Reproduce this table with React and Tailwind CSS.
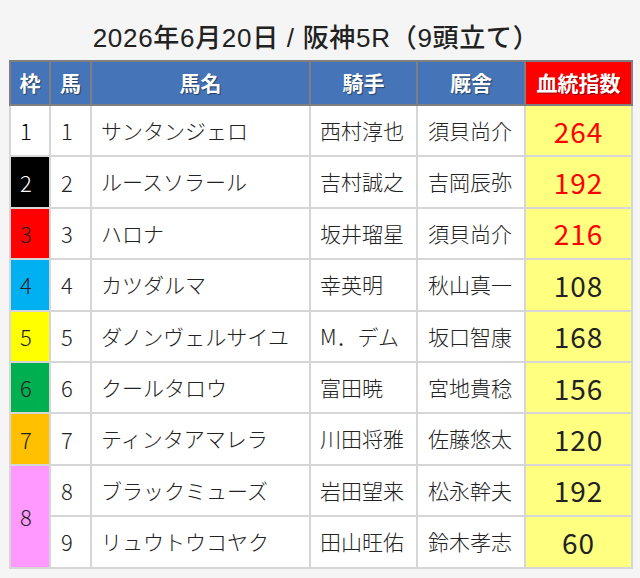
import React from 'react';

const FONT = { fontFamily: '"Liberation Sans", "Noto Sans CJK JP", sans-serif' };
const JP = { fontFamily: '"Noto Sans CJK JP", "Noto Sans", sans-serif' };

// 枠番ごとの色
const FRAME = {
  1: 'bg-white text-black',
  2: 'bg-black text-white',
  3: 'bg-[#ff0000] text-[#2a2a2a]',
  4: 'bg-[#00b0f0] text-[#222]',
  5: 'bg-[#ffff00] text-[#222]',
  6: 'bg-[#00b050] text-[#222]',
  7: 'bg-[#ffc000] text-[#222]',
  8: 'bg-[#ff99ff] text-[#222]',
};

const horses = [
  { frame: 1, no: 1, name: 'サンタンジェロ', jockey: '西村淳也', trainer: '須貝尚介', idx: 264, top: true },
  { frame: 2, no: 2, name: 'ルースソラール', jockey: '吉村誠之', trainer: '吉岡辰弥', idx: 192, top: true },
  { frame: 3, no: 3, name: 'ハロナ', jockey: '坂井瑠星', trainer: '須貝尚介', idx: 216, top: true },
  { frame: 4, no: 4, name: 'カツダルマ', jockey: '幸英明', trainer: '秋山真一', idx: 108 },
  { frame: 5, no: 5, name: 'ダノンヴェルサイユ', jockey: 'M．デム', trainer: '坂口智康', idx: 168 },
  { frame: 6, no: 6, name: 'クールタロウ', jockey: '富田暁', trainer: '宮地貴稔', idx: 156 },
  { frame: 7, no: 7, name: 'ティンタアマレラ', jockey: '川田将雅', trainer: '佐藤悠太', idx: 120 },
  { frame: 8, no: 8, name: 'ブラックミューズ', jockey: '岩田望来', trainer: '松永幹夫', idx: 192, span: 2 },
  { frame: 8, no: 9, name: 'リュウトウコヤク', jockey: '田山旺佑', trainer: '鈴木孝志', idx: 60, skipFrame: true },
];

const th = 'border-2 border-[#7f7f7f] text-white font-bold text-[21px] text-center [text-shadow:1px_1px_1px_rgba(0,0,0,0.45)]';
const td = 'border-2 border-[#d6d6d6] pl-[9px] text-[21px] font-light text-[#222] whitespace-nowrap';

export default function App() {
  return (
    <div className="min-h-[578px] bg-[#f5f5f5] pt-[20px]" style={FONT}>
      <h1 className="text-center text-[26px] font-medium text-[#222] leading-[36px] mb-[4px] pr-[8px] tracking-[0.7px]">
        2026年6月20日 / 阪神5R（9頭立て）
      </h1>

      <table className="mx-[9px] w-[622px] table-fixed border-collapse" style={JP}>
        <colgroup>
          <col className="w-[40px]" />
          <col className="w-[41px]" />
          <col className="w-[219px]" />
          <col className="w-[107px]" />
          <col className="w-[108px]" />
          <col className="w-[107px]" />
        </colgroup>
        <thead>
          <tr className="h-[44px]">
            <th className={`${th} bg-[#4574b8]`}>枠</th>
            <th className={`${th} bg-[#4574b8]`}>馬</th>
            <th className={`${th} bg-[#4574b8]`}>馬名</th>
            <th className={`${th} bg-[#4574b8]`}>騎手</th>
            <th className={`${th} bg-[#4574b8]`}>厩舎</th>
            <th className={`${th} bg-[#ff0000]`}>血統指数</th>
          </tr>
        </thead>
        <tbody>
          {horses.map((h) => (
            <tr key={h.no} className="h-[51.4px] bg-white">
              {!h.skipFrame && (
                <td rowSpan={h.span || 1} className={`${td} ${FRAME[h.frame]} pl-[9px] text-[22px]`}>
                  {h.frame}
                </td>
              )}
              <td className={`${td} pl-[10px] text-[22px]`}>{h.no}</td>
              <td className={`${td} pl-[8px]`}>{h.name}</td>
              <td className={td}>{h.jockey}</td>
              <td className={`${td} pl-[10px]`}>{h.trainer}</td>
              <td
                className={`border-2 border-[#d6d6d6] bg-[#ffff80] text-center text-[28px] font-normal tracking-[1px] ${
                  h.top ? 'text-[#ff0000]' : 'text-[#222]'
                }`}
              >
                {h.idx}
              </td>
            </tr>
          ))}
        </tbody>
      </table>
    </div>
  );
}
